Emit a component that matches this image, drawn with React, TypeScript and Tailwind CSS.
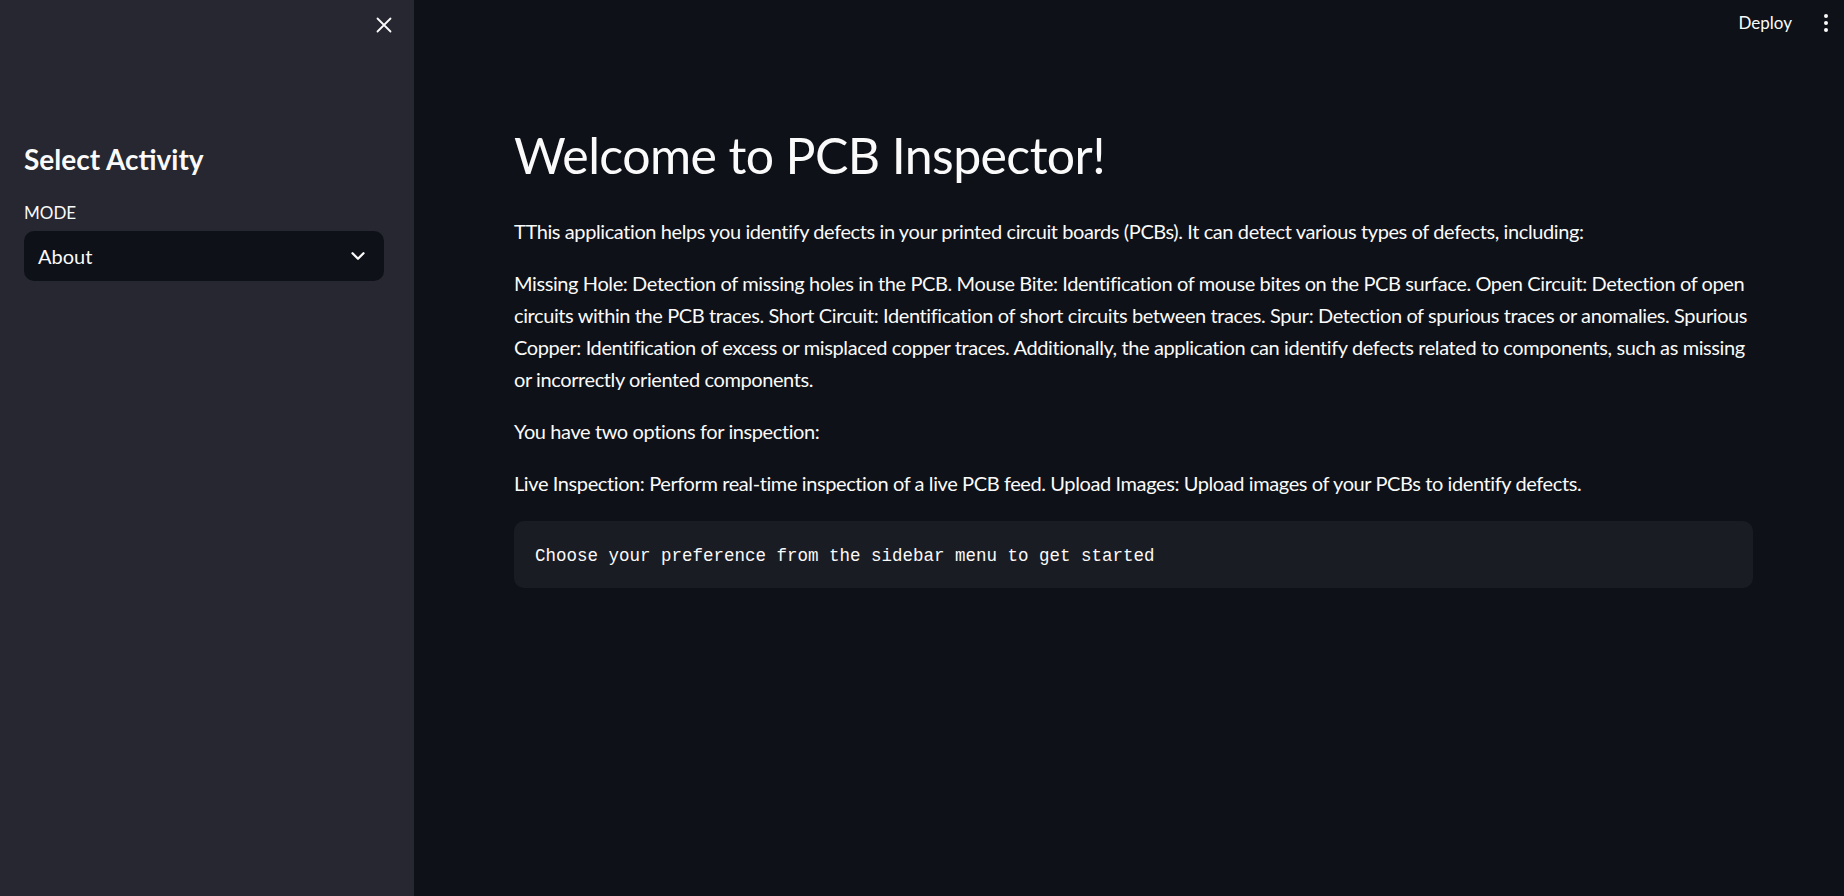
import { ChevronDown, EllipsisVertical } from "lucide-react";

const font = { fontFamily: "Lato, 'Noto Sans', sans-serif" };

function Sidebar() {
  return (
    <aside className="w-[414px] shrink-0 h-full bg-[#262730] flex flex-col text-[#fafafa]">
      {/* close button */}
      <div className="h-[49px] flex items-center justify-end pr-[22px]">
        <svg width="16" height="16" viewBox="0 0 16 16" fill="none" stroke="#fafafa" strokeWidth="1.8" strokeLinecap="round">
          <path d="M1.5 1.5l13 13M14.5 1.5l-13 13" />
        </svg>
      </div>

      <div className="pl-[24px] pr-[30px] mt-[94px]">
        <h2 className="text-[28px] leading-[1.2] font-bold mb-[26px]">Select Activity</h2>
        <label className="block text-[17px] leading-[1.2] mb-[8px]">MODE</label>
        <div className="h-[50px] rounded-[10px] bg-[#0e1117] flex items-center justify-between pl-[14px] pr-[15px]">
          <span className="text-[20px] leading-[1.2]">About</span>
          <ChevronDown size={22} strokeWidth={2.5} color="#fafafa" />
        </div>
      </div>
    </aside>
  );
}

function Header() {
  return (
    <header className="h-[46px] flex items-center justify-end pr-[6px]">
      <span className="text-[17px] leading-[1.2] mr-[22px]">Deploy</span>
      <EllipsisVertical size={24} strokeWidth={2} color="#fafafa" />
    </header>
  );
}

export default function App() {
  return (
    <div className="h-[896px] w-full flex overflow-hidden bg-[#0e1117] text-[#fafafa]" style={font}>
      <Sidebar />
      <main className="flex-1 flex flex-col min-w-0">
        <Header />
        <div className="pl-[100px] pr-[91px] pt-[79px]">
          <h1 className="text-[50px] leading-[1.2] font-normal tracking-[-0.6px] mb-[30px]">Welcome to PCB Inspector!</h1>
          <div className="text-[20px] leading-[32px] tracking-[-0.4px]">
            <p className="mb-[20px]">
              TThis application helps you identify defects in your printed circuit boards (PCBs). It can detect various types of defects, including:
            </p>
            <p className="mb-[20px]">
              Missing Hole: Detection of missing holes in the PCB. Mouse Bite: Identification of mouse bites on the PCB surface. Open Circuit: Detection of open circuits within the PCB traces. Short Circuit: Identification of short circuits between traces. Spur: Detection of spurious traces or anomalies. Spurious Copper: Identification of excess or misplaced copper traces. Additionally, the application can identify defects related to components, such as missing or incorrectly oriented components.
            </p>
            <p className="mb-[20px]">You have two options for inspection:</p>
            <p className="mb-[22px]">
              Live Inspection: Perform real-time inspection of a live PCB feed. Upload Images: Upload images of your PCBs to identify defects.
            </p>
          </div>
          <div className="h-[67px] rounded-[10px] bg-[#1a1c24] flex items-center px-[21px] pt-[3px]">
            <code className="text-[17.5px] text-[#fafafa]" style={{ fontFamily: "'Liberation Mono', 'DejaVu Sans Mono', monospace" }}>
              Choose your preference from the sidebar menu to get started
            </code>
          </div>
        </div>
      </main>
    </div>
  );
}
